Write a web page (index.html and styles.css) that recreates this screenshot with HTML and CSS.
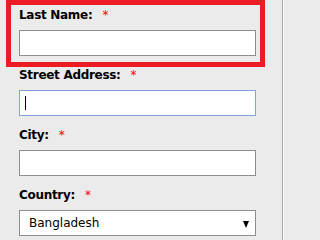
FILE: index.html
```html
<!DOCTYPE html>
<html lang="en">
<head>
<meta charset="utf-8">
<title>Address form</title>
<link rel="stylesheet" href="styles.css">
</head>
<body>
<div class="panel">
  <form class="form">
    <div class="field field--flagged">
      <label class="label" for="last">Last Name:<span class="req">*</span></label>
      <input class="input" id="last" type="text">
    </div>
    <div class="field">
      <label class="label" for="street">Street Address:<span class="req">*</span></label>
      <div class="input-wrap">
        <input class="input input--focus" id="street" type="text">
        <span class="caret"></span>
      </div>
    </div>
    <div class="field">
      <label class="label" for="city">City:<span class="req">*</span></label>
      <input class="input" id="city" type="text">
    </div>
    <div class="field">
      <label class="label" for="country">Country:<span class="req">*</span></label>
      <div class="select-wrap">
        <select class="select" id="country">
          <option>Bangladesh</option>
        </select>
      </div>
    </div>
  </form>
</div>
</body>
</html>
```

FILE: styles.css
```css
html, body {
  margin: 0;
  padding: 0;
  background: #ebebeb;
  height: 100%;
  overflow: hidden;
}

body {
  font-family: "DejaVu Sans", Verdana, sans-serif;
  color: #000;
}

.panel {
  width: 282px;
  height: 100%;
  border-right: 1px solid #a8a8a8;
  box-shadow: 1px 0 0 #f7f7f7;
}

.form {
  padding: 8px 0 0 19px;
}

.field {
  margin-bottom: 12px;
}

.field--flagged {
  box-sizing: border-box;
  width: 259px;
  margin: -8px 0 1px -13px;
  padding: 3px 0 6px 8px;
  border: 5px solid #ed1c24;
}

.label {
  display: block;
  height: 15px;
  line-height: 15px;
  margin-bottom: 7px;
  font-size: 12px;
  font-weight: bold;
  letter-spacing: -0.3px;
  white-space: nowrap;
}

.req {
  margin-left: 10px;
  color: #ff0000;
  font-weight: normal;
  letter-spacing: 0;
}

.input {
  display: block;
  box-sizing: border-box;
  width: 237px;
  height: 26px;
  margin: 0;
  padding: 0;
  border: 1px solid #8e8e8e;
  background: #fff;
  outline: none;
}

.input--focus {
  border-color: #84a3da;
}

.input-wrap {
  position: relative;
  width: 237px;
}

.caret {
  position: absolute;
  left: 6px;
  top: 6px;
  width: 1px;
  height: 14px;
  background: #000;
}

.select-wrap {
  position: relative;
  width: 237px;
}

.select {
  display: block;
  box-sizing: border-box;
  width: 237px;
  height: 26px;
  margin: 0;
  padding: 0 0 0 9px;
  border: 1px solid #8e8e8e;
  border-radius: 0;
  background: #fff;
  color: #000;
  font-family: "DejaVu Sans", Verdana, sans-serif;
  font-size: 12px;
  -webkit-appearance: none;
  appearance: none;
  outline: none;
}

.select-wrap::after {
  content: "";
  position: absolute;
  right: 7px;
  top: 11px;
  width: 0;
  height: 0;
  border-left: 3px solid transparent;
  border-right: 3px solid transparent;
  border-top: 7px solid #000;
  pointer-events: none;
}
```
